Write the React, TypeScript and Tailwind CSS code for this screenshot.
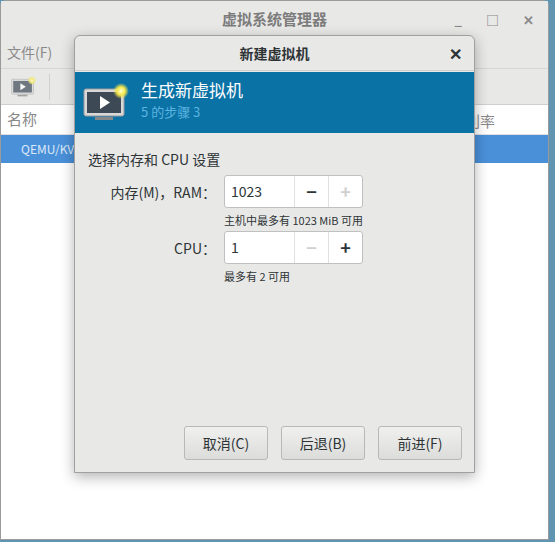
import React from "react";

const Monitor = ({ s = 1 }: { s?: number }) => (
  <svg width={48 * s} height={40 * s} viewBox="0 0 48 40">
    <defs>
      <radialGradient id={"g" + s} cx="0.5" cy="0.5" r="0.5">
        <stop offset="0" stopColor="#ffffd0" />
        <stop offset="0.5" stopColor="#f6e84a" />
        <stop offset="1" stopColor="#f6e84a" stopOpacity="0" />
      </radialGradient>
    </defs>
    <rect x="1" y="6" width="40" height="27" rx="2" fill="#d8d8d8" stroke="#9a9a9a" />
    <rect x="4" y="9" width="34" height="21" fill="#3d4a55" />
    <path d="M17 13 L27 19.5 L17 26 Z" fill="#fff" />
    <rect x="12" y="34" width="18" height="3" fill="#888" />
    <circle cx="38" cy="8" r="8" fill={"url(#g" + s + ")"} />
  </svg>
);

export default function App() {
  const font = { fontFamily: '"Noto Sans CJK SC","Noto Sans",sans-serif' };
  return (
    <div className="relative w-[555px] h-[542px] bg-[#5f95b0] overflow-hidden" style={font}>
      <div className="w-[549px] h-[540px] bg-white border border-[#9a9a9a] rounded-t-md flex flex-col">
        <div className="h-[36px] bg-[#e8e8e7] flex items-center relative text-[15px] text-[#7c7c7c] font-bold">
          <div className="flex-1 text-center">虚拟系统管理器</div>
          <div className="absolute right-[14px] top-[9px] flex gap-[24px] text-[13px] text-[#8a8a8a]">
            <span>_</span><span>□</span><span>✕</span>
          </div>
        </div>
        <div className="h-[32px] bg-[#e8e8e7] flex items-center px-[6px] text-[14px] text-[#8a8a8a] border-b border-[#d6d6d6]">文件(F)</div>
        <div className="h-[36px] bg-[#e8e8e7] flex items-center pl-[10px] gap-[12px] border-b border-[#cfcfcf]">
          <div className="opacity-70"><Monitor s={0.55} /></div>
          <div className="w-px h-[26px] bg-[#cfcfcf]" />
        </div>
        <div className="h-[30px] flex items-center px-[6px] text-[15px] text-[#888] border-b border-[#e0e0e0]">名称</div>
        <div className="h-[28px] bg-[#4a90d9] flex items-center pl-[20px] text-[12px] text-[#dde9f7]">QEMU/KVM</div>
      </div>
      <div className="absolute right-[60px] top-[110px] text-[15px] text-[#888]">利率</div>

      <div className="absolute left-[74px] top-[35px] w-[401px] h-[438px] bg-[#e8e8e7] border border-[#a0a0a0] rounded-t-md shadow-[0_4px_14px_rgba(0,0,0,0.3)] flex flex-col">
        <div className="h-[35px] flex items-center justify-center relative text-[14px] font-bold text-[#2e3436] border-b border-[#d0d0d0]">
          新建虚拟机
          <span className="absolute right-[12px] text-[16px]">✕</span>
        </div>
        <div className="h-[61px] mt-[1px] bg-[#0b72a6] flex items-center pl-[8px] gap-[10px]">
          <Monitor />
          <div className="flex flex-col -mt-[6px]">
            <div className="text-[17px] text-white leading-[24px]">生成新虚拟机</div>
            <div className="text-[13px] text-[#5bb4e0] leading-[20px]">5 的步骤 3</div>
          </div>
        </div>
        <div className="pl-[13px] pt-[16px] text-[14px] text-[#2e3436]">
          <div>选择内存和 CPU 设置</div>
          <div className="grid grid-cols-[128px_auto] gap-x-[8px] mt-[5px]">
            <div className="text-right self-center leading-[34px]">内存(M)，RAM：</div>
            <Spin value="1023" minus plus={false} />
            <div />
            <div className="text-[11px] leading-[22px]">主机中最多有 1023 MiB 可用</div>
            <div className="text-right self-center leading-[34px]">CPU：</div>
            <Spin value="1" minus={false} plus />
            <div />
            <div className="text-[11px] leading-[22px]">最多有 2 可用</div>
          </div>
        </div>
        <div className="flex-1" />
        <div className="flex justify-end gap-[13px] pr-[12px] pb-[12px]">
          {["取消(C)", "后退(B)", "前进(F)"].map((t) => (
            <div key={t} className="w-[84px] h-[34px] rounded-[3px] border border-[#b8b8b8] bg-gradient-to-b from-[#f0f0ef] to-[#dcdcdb] flex items-center justify-center text-[14px] text-[#2e3436]">{t}</div>
          ))}
        </div>
      </div>
    </div>
  );
}

function Spin({ value, minus, plus }: { value: string; minus: boolean; plus: boolean }) {
  return (
    <div className="w-[139px] h-[33px] bg-white border border-[#c0c0c0] rounded-[3px] flex text-[14px]">
      <div className="flex-1 flex items-center pl-[6px] text-[#2e3436]">{value}</div>
      <div className={"w-[34px] border-l border-[#e0e0e0] flex items-center justify-center text-[18px] font-bold " + (minus ? "text-[#2e3436]" : "text-[#d0d0d0]")}>−</div>
      <div className={"w-[34px] border-l border-[#e0e0e0] flex items-center justify-center text-[18px] font-bold " + (plus ? "text-[#2e3436]" : "text-[#d0d0d0]")}>+</div>
    </div>
  );
}
